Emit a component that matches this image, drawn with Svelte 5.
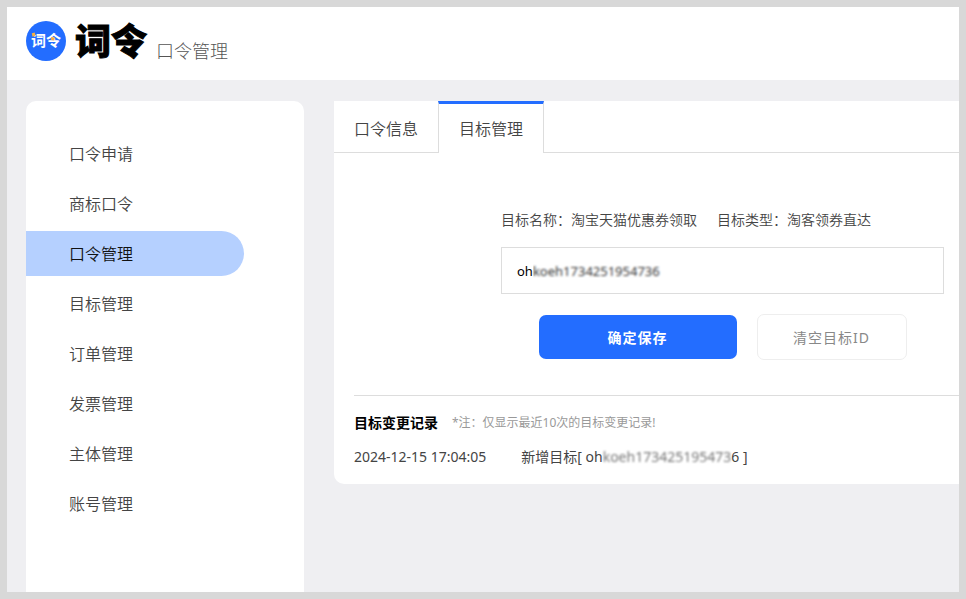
<script lang="ts">
  const menu = ['口令申请', '商标口令', '口令管理', '目标管理', '订单管理', '发票管理', '主体管理', '账号管理'];
  const tabs = ['口令信息', '目标管理'];
  const records = [{ time: '2024-12-15 17:04:05', id: 'ohkoeh1734251954736' }];

  let activeMenu = $state('口令管理');
  let activeTab = $state('目标管理');
  let targetId = $state('ohkoeh1734251954736');
</script>

<div class="frame">
  <header class="header">
    <svg class="badge" width="40" height="40" viewBox="0 0 40 40" aria-hidden="true">
      <circle cx="20" cy="20" r="20" fill="#236dff" />
      <text x="20" y="25" text-anchor="middle" class="badge-text">词令</text>
      <path d="M5.8 12.2l3-.8.6 3.4-2.9.9zM25.2 16l3.6.6-.6 2.8-3.4-.5z" fill="#f5b040" />
    </svg>
    <span class="brand">词令</span>
    <span class="subtitle">口令管理</span>
  </header>

  <div class="body">
    <nav class="sidebar">
      {#each menu as item}
        <a href="#top" class="menu-item" class:active={item === activeMenu} onclick={() => (activeMenu = item)}>{item}</a>
      {/each}
    </nav>

    <main class="panel">
      <div class="tabs" role="tablist">
        {#each tabs as tab}
          <button class="tab" class:active={tab === activeTab} role="tab" aria-selected={tab === activeTab} onclick={() => (activeTab = tab)}>{tab}</button>
        {/each}
      </div>

      <form class="form" onsubmit={(e) => e.preventDefault()}>
        <label class="info" for="target-id">
          <span>目标名称：淘宝天猫优惠券领取</span>
          <span>目标类型：淘客领券直达</span>
        </label>
        <div class="field">
          <input id="target-id" type="text" bind:value={targetId} />
          <span class="mask"></span>
        </div>
        <div class="actions">
          <button class="btn save" type="submit">确定保存</button>
          <button class="btn clear" type="button" onclick={() => (targetId = '')}>清空目标ID</button>
        </div>
      </form>

      <section class="log">
        <div class="log-head">
          <h2>目标变更记录</h2>
          <small>*注：仅显示最近10次的目标变更记录!</small>
        </div>
        {#each records as r}
          <div class="record">
            <time>{r.time}</time>
            <span>新增目标[ {r.id.slice(0, 2)}<span class="blurred">{r.id.slice(2, -1)}</span>{r.id.slice(-1)} ]</span>
          </div>
        {/each}
      </section>
    </main>
  </div>
</div>

<style>
  :global(body) { background: #d8d8d8; }

  .frame {
    box-sizing: border-box;
    height: 100vh;
    border: 7px solid #d8d8d8;
    background: #efeff2;
    overflow: hidden;
    display: flex; flex-direction: column;
    font-family: "Noto Sans", "Noto Sans CJK SC", sans-serif;
    color: #444;
  }
  button, input { font-family: inherit; }

  .header {
    display: flex; align-items: center;
    height: 73px; flex: none;
    padding: 0 19px 5px;
    background: #fff;
    box-sizing: border-box;
  }
  .badge-text {
    font-family: "Noto Sans CJK SC", sans-serif;
    font-size: 15px; font-weight: 700;
    fill: #fff;
  }
  .brand {
    margin: 0 0 4px 9px;
    font-family: "Noto Sans CJK SC", sans-serif;
    font-size: 36px; line-height: 40px; font-weight: 900;
    color: #000;
    -webkit-text-stroke: 1px #000;
  }
  .subtitle {
    margin: 17px 0 0 9px;
    font-family: "Noto Sans CJK SC", sans-serif;
    font-size: 18px; line-height: 24px; font-weight: 300;
    color: #555;
  }

  .body {
    flex: 1; min-height: 0;
    display: flex; align-items: flex-start; gap: 30px;
    padding: 21px 0 0 19px;
  }
  .sidebar {
    box-sizing: border-box;
    width: 278px; flex: none; align-self: stretch;
    display: flex; flex-direction: column; gap: 5px;
    padding-top: 30px;
    background: #fff;
    border-radius: 10px 10px 0 0;
  }
  .menu-item {
    width: 175px;
    padding: 0 0 1px 43px;
    font-family: "Noto Sans CJK SC", sans-serif;
    font-size: 16px; line-height: 44px; font-weight: 350;
    color: #444;
    text-decoration: none;
    border-radius: 0 23px 23px 0;
  }
  .menu-item.active { background: #b5d0ff; color: #111; }

  .panel {
    flex: 1; min-width: 0;
    background: #fff;
    border-radius: 0 0 0 10px;
  }
  .tabs { display: flex; }
  .tabs::after { content: ''; flex: 1; border-bottom: 1px solid #ddd; }
  .tab {
    height: 52px;
    padding: 3px 20px 0;
    border: 0; border-bottom: 1px solid #ddd;
    background: #fff;
    font-family: "Noto Sans CJK SC", sans-serif;
    font-size: 16px; font-weight: 350;
    color: #444;
    cursor: pointer;
  }
  .tab.active {
    padding: 0 20px 1px;
    border: 1px solid #ddd; border-width: 3px 1px 0;
    border-top-color: #236dff;
  }

  .form { padding: 54px 15px 35px 167px; }
  .info {
    display: flex; gap: 20px;
    font-family: "Noto Sans CJK SC", sans-serif;
    font-size: 14px; line-height: 24px; font-weight: 350;
    white-space: nowrap;
  }
  .field { position: relative; margin-top: 16px; }
  input {
    box-sizing: border-box;
    display: block;
    width: 100%; height: 47px;
    padding: 0 15px;
    border: 1px solid #ddd;
    font-size: 13px;
    color: #000;
    outline: none;
  }
  .mask {
    position: absolute; left: 32px; top: 14px;
    width: 130px; height: 20px;
    background: rgba(255, 255, 255, 0.2);
    backdrop-filter: blur(1px);
    pointer-events: none;
  }
  .actions {
    display: flex; align-items: center; justify-content: center; gap: 20px;
    margin-top: 20px;
  }
  .btn {
    height: 46px;
    border-radius: 7px;
    font-size: 14px;
    letter-spacing: 1px;
    cursor: pointer;
  }
  .save { width: 198px; height: 44px; border: 0; background: #236dff; color: #fff; font-weight: 700; }
  .clear { width: 150px; border: 1px solid #eee; background: #fff; color: #888; }

  .log {
    margin-left: 20px;
    padding: 15px 0;
    border-top: 1px solid #ddd;
  }
  .log-head { display: flex; align-items: center; gap: 14px; line-height: 24px; }
  h2 { margin: 0; font-size: 14px; font-weight: 700; color: #000; }
  small { font-size: 12px; color: #999; }
  .record {
    display: flex; gap: 35px;
    margin-top: 10px;
    font-size: 14px; line-height: 24px;
  }
  .blurred { filter: blur(1px); color: #777; }
</style>
